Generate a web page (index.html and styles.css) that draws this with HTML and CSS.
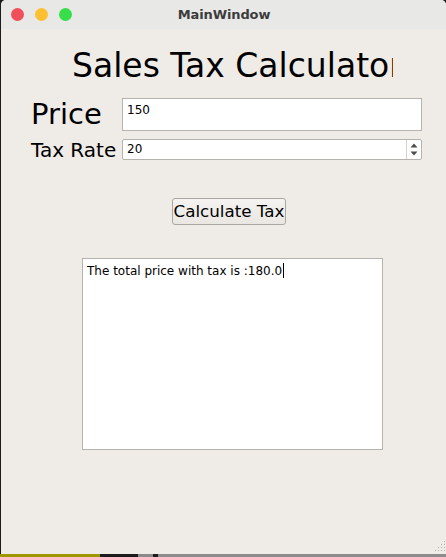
FILE: index.html
```html
<!DOCTYPE html>
<html>
<head>
<meta charset="utf-8">
<title>MainWindow</title>
<link rel="stylesheet" href="styles.css">
</head>
<body>
<div class="screen">
  <div class="window">
    <div class="titlebar">
      <div class="lights">
        <span class="light red"></span>
        <span class="light yellow"></span>
        <span class="light green"></span>
      </div>
      <div class="title">MainWindow</div>
    </div>
    <div class="content">
      <div class="heading">Sales Tax Calculator</div>
      <div class="row row-price">
        <label class="lbl lbl-price">Price</label>
        <div class="textbox price-box">150</div>
      </div>
      <div class="row row-rate">
        <label class="lbl lbl-rate">Tax Rate</label>
        <div class="spinbox">
          <span class="spin-value">20</span>
          <div class="spin-buttons">
            <svg width="14" height="19" viewBox="0 0 14 19">
              <path d="M3.5 7.5 L7 3.5 L10.5 7.5 Z" fill="#4d4d4d"/>
              <path d="M3.5 11.5 L7 15.5 L10.5 11.5 Z" fill="#4d4d4d"/>
            </svg>
          </div>
        </div>
      </div>
      <button class="btn">Calculate Tax</button>
      <div class="output">The total price with tax is :180.0<span class="caret"></span></div>
      <svg class="grip" width="12" height="12" viewBox="0 0 12 12">
        <g fill="#b3afa9">
          <rect x="10" y="0" width="1" height="1"/>
          <rect x="7" y="3" width="1" height="1"/><rect x="10" y="3" width="1" height="1"/>
          <rect x="4" y="6" width="1" height="1"/><rect x="7" y="6" width="1" height="1"/><rect x="10" y="6" width="1" height="1"/>
          <rect x="1" y="9" width="1" height="1"/><rect x="4" y="9" width="1" height="1"/><rect x="7" y="9" width="1" height="1"/><rect x="10" y="9" width="1" height="1"/>
        </g>
      </svg>
    </div>
  </div>
  <div class="bottom-strip">
    <span class="seg olive"></span>
    <span class="seg black1"></span>
    <span class="seg grey1"></span>
    <span class="seg black2"></span>
    <span class="seg grey2"></span>
  </div>
</div>
</body>
</html>
```

FILE: styles.css
```css
html, body {
  margin: 0;
  padding: 0;
  background: #1c1c1c;
  overflow: hidden;
}

.screen {
  width: 446px;
  height: 557px;
  display: flex;
  flex-direction: column;
  background: #1c1c1c;
}

.window {
  margin-left: 1px;
  width: 445px;
  height: 554px;
  display: flex;
  flex-direction: column;
  background: #efebe7;
  border-radius: 5px 5px 0 0;
  overflow: hidden;
  font-family: "DejaVu Sans", "Liberation Sans", sans-serif;
  color: #000;
}

.titlebar {
  height: 29px;
  background: #e8e8e7;
  display: grid;
  align-items: center;
}

.lights {
  grid-area: 1 / 1;
  display: flex;
  gap: 11px;
  padding-left: 10px;
}

.light {
  width: 13px;
  height: 13px;
  border-radius: 50%;
  display: block;
}

.red { background: #f0505a; }
.yellow { background: #fcc030; }
.green { background: #38dd4a; }

.title {
  grid-area: 1 / 1;
  justify-self: center;
  font-weight: bold;
  font-size: 13px;
  color: #3c3c3c;
  padding-left: 1px;
  letter-spacing: -0.1px;
}

.content {
  position: relative;
  flex: 1;
  display: flex;
  flex-direction: column;
  align-items: flex-start;
}

.heading {
  margin: 20px 0 0 71px;
  font-size: 33px;
  line-height: 33px;
  width: 321px;
  white-space: nowrap;
  overflow: hidden;
}

.row {
  display: flex;
  padding-left: 28px;
}

.lbl {
  width: 93px;
  white-space: nowrap;
}

.row-price {
  margin-top: 16px;
  height: 33px;
}

.lbl-price {
  font-size: 29px;
  line-height: 33px;
  padding-left: 2px;
  width: 91px;
}

.textbox {
  box-sizing: border-box;
  width: 300px;
  height: 33px;
  background: #fff;
  border: 1px solid #b6b2ac;
  padding: 4px 0 0 4px;
  font-size: 12px;
  line-height: 14px;
}

.row-rate {
  margin-top: 8px;
  height: 21px;
}

.lbl-rate {
  font-size: 20px;
  line-height: 20px;
  padding-top: 1px;
  padding-left: 2px;
  width: 91px;
}

.spinbox {
  box-sizing: border-box;
  width: 300px;
  height: 21px;
  background: #fff;
  border: 1px solid #b6b2ac;
  border-radius: 2px;
  display: flex;
  align-items: stretch;
}

.spin-value {
  flex: 1;
  padding-left: 4px;
  font-size: 12px;
  line-height: 19px;
}

.spin-buttons {
  width: 14px;
  border-left: 1px solid #d4d0ca;
  display: flex;
}

.btn {
  margin: 38px 0 0 171px;
  box-sizing: border-box;
  width: 114px;
  height: 27px;
  padding: 0;
  border: 1px solid #aaa7a2;
  border-radius: 3px;
  background: linear-gradient(#f4f3f1, #eae7e3);
  font-family: "DejaVu Sans", "Liberation Sans", sans-serif;
  font-size: 16.7px;
  line-height: 25px;
  color: #000;
  text-align: center;
  white-space: nowrap;
}

.output {
  margin: 33px 0 0 81px;
  box-sizing: border-box;
  width: 301px;
  height: 192px;
  background: #fff;
  border: 1px solid #b6b2ac;
  padding: 4px 0 0 4px;
  font-size: 12px;
  line-height: 14px;
  white-space: nowrap;
}

.caret {
  display: inline-block;
  width: 1px;
  height: 15px;
  background: #000;
  margin-left: 1px;
  vertical-align: -3px;
}

.grip {
  position: absolute;
  right: 0;
  bottom: 1px;
}

.bottom-strip {
  height: 3px;
  display: flex;
}

.seg { display: block; height: 3px; }
.olive { width: 100px; background: #9d9800; }
.black1 { width: 38px; background: #1c1c1c; }
.grey1 { width: 15px; background: #8a8a8a; }
.black2 { width: 5px; background: #1c1c1c; }
.grey2 { flex: 1; background: #8d8d8d; }
```
